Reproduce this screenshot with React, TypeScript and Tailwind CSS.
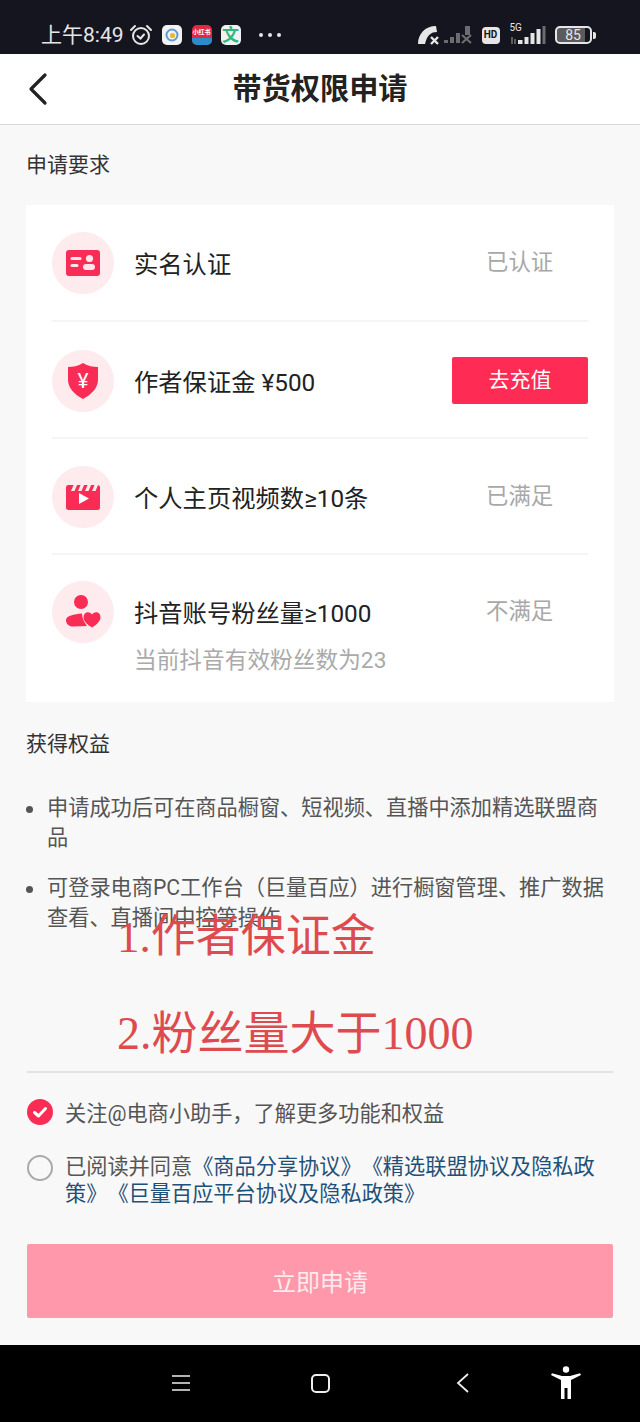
const fontStack = 'font-["Roboto","Noto_Sans_CJK_SC",sans-serif] [text-spacing-trim:space-all]';

const StatusBar = () => (
  <div className="flex h-[54px] shrink-0 items-center bg-[#15151f] pt-[16px] text-[#e6e6e6]">
    <span className="ml-[41px] text-[21px] leading-[28px]">上午8:49</span>
    <svg width="24" height="24" viewBox="0 0 24 24" fill="none" stroke="#e6e6e6" strokeWidth="2" className="ml-[5px]">
      <circle cx="12" cy="13" r="8" />
      <path d="M8.5 13 L11.5 15.5 L15 11.5" strokeLinecap="round" />
      <path d="M2 7 L6 3 M22 7 L18 3" strokeLinecap="round" />
    </svg>
    <div className="ml-[9px] flex h-[20px] w-[20px] items-center justify-center rounded-[5px] bg-[#f2f2f2]">
      <svg width="16" height="16" viewBox="0 0 16 16" fill="none">
        <circle cx="8" cy="8" r="5.5" stroke="#5f9bd6" strokeWidth="2" />
        <circle cx="8.5" cy="8.5" r="2.6" fill="#e8b93a" />
      </svg>
    </div>
    <div className="ml-[10px] flex h-[20px] w-[20px] flex-col overflow-hidden rounded-[5px] bg-[#e5283f]">
      <span className="h-[13px] pt-[3px] text-center text-[6px] leading-[8px] font-bold whitespace-nowrap text-white">小红书</span>
      <span className="flex-1 bg-[#2a8cc9]" />
    </div>
    <div className="ml-[9px] flex h-[20px] w-[20px] items-center justify-center rounded-[5px] bg-[#f2f2f2] text-[17px] leading-none font-bold text-[#2fb67c]">
      文
    </div>
    <div className="ml-[18px] flex gap-[5px]">
      <span className="h-[4px] w-[4px] rounded-full bg-[#e6e6e6]" />
      <span className="h-[4px] w-[4px] rounded-full bg-[#e6e6e6]" />
      <span className="h-[4px] w-[4px] rounded-full bg-[#e6e6e6]" />
    </div>

    <svg width="24" height="20" viewBox="0 0 24 20" className="ml-[136px]">
      <path d="M1 19 C1 9 8 1 19 1 L20 7 C14 7 10 10 8 19 Z" fill="#e6e6e6" />
      <path d="M14 12 L21 19 M21 12 L14 19" stroke="#e6e6e6" strokeWidth="2.4" />
    </svg>
    <svg width="30" height="20" viewBox="0 0 30 20" className="ml-[2px]" fill="#6b6b70">
      <rect x="1" y="15" width="4" height="3" />
      <rect x="7" y="12" width="4" height="6" />
      <rect x="13" y="8" width="4" height="10" />
      <rect x="22" y="1" width="5" height="9" />
      <path d="M19 10 L28 18 M28 10 L19 18" stroke="#6b6b70" strokeWidth="2.2" />
    </svg>
    <div className="ml-[9px] flex h-[17px] w-[18px] items-center justify-center rounded-[4px] bg-[#e6e6e6] text-[10px] leading-none font-bold text-[#15151f]">
      HD
    </div>
    <div className="relative ml-[8px] h-[22px] w-[39px]">
      <span className="absolute -top-[1px] left-[2px] text-[10px] leading-[10px]">5G</span>
      <svg width="39" height="22" viewBox="0 0 39 22" fill="#e6e6e6">
        <path d="M4 13 V20 M7 15 V20" stroke="#777" strokeWidth="1.5" />
        <path d="M10 16 H14.5 V20 H10 Z M16.5 13 H20.5 V20 H16.5 Z M22.5 9 H26.5 V20 H22.5 Z M28.5 5 H32.5 V20 H28.5 Z" />
        <rect x="34.5" y="2" width="3" height="18" fill="#6b6b70" />
      </svg>
    </div>
    <div className="ml-[8px] flex h-[18px] w-[37px] items-center justify-center rounded-[5px] border-2 border-[#e6e6e6] bg-[linear-gradient(90deg,#5a5a5f_85%,#15151f_85%)] text-[14px] leading-none">
      85
    </div>
    <span className="ml-[1px] h-[7px] w-[3px] rounded-r-[2px] bg-[#e6e6e6]" />
  </div>
);

const IconCircle = ({ children }: { children: React.ReactNode }) => (
  <div className="h-[62px] w-[62px] shrink-0 rounded-full bg-[#fdebee]">
    <svg width="62" height="62" viewBox="0 0 62 62">{children}</svg>
  </div>
);

const CardIcon = () => (
  <IconCircle>
    <rect x="14" y="18" width="34" height="26" rx="3" fill="#f92c55" />
    <rect x="18.5" y="25" width="11" height="3" rx="1.5" fill="#fde6ea" />
    <rect x="18.5" y="32" width="8" height="3" rx="1.5" fill="#fde6ea" />
    <circle cx="37.5" cy="26.5" r="3.6" fill="#fde6ea" />
    <rect x="31" y="32" width="12" height="6" rx="3" fill="#fde6ea" />
  </IconCircle>
);

const ShieldIcon = () => (
  <IconCircle>
    <path d="M31 13 C36 16 41 17 46 17 V30 C46 38 39 45 31 49 C23 45 16 38 16 30 V17 C21 17 26 16 31 13 Z" fill="#f92c55" />
    <text x="31" y="38" textAnchor="middle" fontSize="21" fontWeight="400" fill="#fff" fontFamily="Roboto">¥</text>
  </IconCircle>
);

const VideoIcon = () => (
  <IconCircle>
    <rect x="14" y="19" width="34" height="25" rx="2.5" fill="#f92c55" />
    <path d="M19 25 L22 18 H25.5 L22.5 25 Z M26 25 L29 18 H32.5 L29.5 25 Z M33 25 L36 18 H39.5 L36.5 25 Z M40 25 L43 18 H46.5 L43.5 25 Z" fill="#fdebee" />
    <path d="M27 27 L37 32.5 L27 38 Z" fill="#fff" strokeLinejoin="round" />
  </IconCircle>
);

const FansIcon = () => (
  <IconCircle>
    <circle cx="29" cy="21" r="7" fill="#f92c55" />
    <path d="M14 39 C14 35 22 33 30 32.5 C30 37 32 41 35 45 L21 45.5 C17 45.5 14 43 14 39 Z" fill="#f92c55" />
    <path d="M40 46.5 C35 43.5 31.5 40 31.5 36 C31.5 31.5 37 29.5 40 33.5 C43 29.5 48.5 31 48.5 36 C48.5 40 45 43.5 40 46.5 Z" fill="#f92c55" />
  </IconCircle>
);

const Requirement = ({
  icon,
  title,
  note,
  right,
  className
}: {
  icon: React.ReactNode;
  title: string;
  note?: string;
  right: React.ReactNode;
  className: string;
}) => (
  <div className={`flex items-start ${className}`}>
    {icon}
    <div className="ml-[20px] flex-1 pt-[17px]">
      <div className="text-[24.3px] leading-[32px] text-[#222]">{title}</div>
      {note && <div className="mt-[15px] text-[22.7px] leading-[32px] text-[#aaa]">{note}</div>}
    </div>
    {right}
  </div>
);

const Status = ({ text }: { text: string }) => (
  <span className="w-[102px] pt-[14px] text-[22.4px] leading-[32px] text-[#a8a8a8]">{text}</span>
);

const Bullet = ({ children }: { children: React.ReactNode }) => (
  <li className="flex">
    <span className="mt-[13px] mr-[14px] h-[7px] w-[7px] shrink-0 rounded-full bg-[#555]" />
    <span className="text-[21.2px] leading-[30px] text-[#555]">{children}</span>
  </li>
);

export default function App() {
  return (
    <div className={`flex h-[1422px] w-[640px] flex-col overflow-hidden bg-[#f8f8f8] ${fontStack}`}>
      <StatusBar />

      <header className="grid h-[71px] shrink-0 grid-cols-[1fr_auto_1fr] items-center border-b border-[#d8d8d8] bg-white">
        <svg width="22" height="34" viewBox="0 0 22 34" fill="none" stroke="#222" strokeWidth="3.2" strokeLinecap="round" strokeLinejoin="round" className="ml-[28px]">
          <path d="M17 3 L3 17 L17 31" />
        </svg>
        <h1 className="text-[29.2px] leading-[40px] font-bold text-[#222]">带货权限申请</h1>
      </header>

      <main className="relative flex-1">
        <h2 className="mt-[25px] ml-[26px] text-[21px] leading-[30px] text-[#333]">申请要求</h2>

        <section className="mx-[26px] mt-[25px] h-[497px] bg-white px-[26px]">
          <Requirement
            className="h-[117px] border-b-2 border-[#f5f5f5] pt-[27px]"
            icon={<CardIcon />}
            title="实名认证"
            right={<Status text="已认证" />}
          />
          <Requirement
            className="h-[117px] border-b-2 border-[#f5f5f5] pt-[28px]"
            icon={<ShieldIcon />}
            title="作者保证金 ¥500"
            right={
              <button className="mt-[7px] h-[47px] w-[136px] rounded-[2px] bg-[#fe2c55] pt-[1px] text-[21px] text-white">
                去充值
              </button>
            }
          />
          <Requirement
            className="h-[116px] border-b-2 border-[#f5f5f5] pt-[27px]"
            icon={<VideoIcon />}
            title="个人主页视频数≥10条"
            right={<Status text="已满足" />}
          />
          <Requirement
            className="pt-[26px]"
            icon={<FansIcon />}
            title="抖音账号粉丝量≥1000"
            note="当前抖音有效粉丝数为23"
            right={<Status text="不满足" />}
          />
        </section>

        <h2 className="mt-[27px] ml-[26px] text-[21px] leading-[30px] text-[#333]">获得权益</h2>

        <ul className="mt-[34px] ml-[26px] flex w-[581px] flex-col gap-[20px]">
          <Bullet>申请成功后可在商品橱窗、短视频、直播中添加精选联盟商品</Bullet>
          <Bullet>可登录电商PC工作台（巨量百应）进行橱窗管理、推广数据查看、直播间中控等操作</Bullet>
        </ul>

        <div className="mx-[27px] mt-[138px] border-t-2 border-[#e2e2e2] pt-[26px]">
          <div className="flex items-start">
            <svg width="26" height="26" viewBox="0 0 26 26" className="shrink-0">
              <circle cx="13" cy="13" r="13" fill="#f92c55" />
              <path d="M7.5 13.5 L11.5 17 L18.5 9.5" fill="none" stroke="#fff" strokeWidth="3" strokeLinecap="round" strokeLinejoin="round" />
            </svg>
            <span className="ml-[12px] text-[21.2px] leading-[30px] text-[#555]">关注@电商小助手，了解更多功能和权益</span>
          </div>
          <div className="mt-[24px] flex items-start">
            <span className="mt-[2px] h-[26px] w-[26px] shrink-0 rounded-full border-2 border-[#aaa]" />
            <p className="ml-[12px] text-[21.2px] leading-[27px] text-[#555]">
              已阅读并同意
              <span className="text-[#1f5078]">《商品分享协议》《精选联盟协议及隐私政策》《巨量百应平台协议及隐私政策》</span>
            </p>
          </div>
        </div>

        <button className="mx-[27px] mt-[37px] h-[74px] w-[586px] rounded-[2px] bg-[#fe98aa] pt-[3px] text-[24px] text-white/80">
          立即申请
        </button>

        {/* annotation written over the screenshot */}
        <div className='absolute top-[782px] left-[117px] font-["Liberation_Serif","Noto_Sans_CJK_SC",serif] text-[45px] leading-[60px] whitespace-nowrap text-[#de4b4f]'>
          <div>1.作者保证金</div>
          <div className="mt-[37px] text-[46px]">2.粉丝量大于1000</div>
        </div>
      </main>

      <nav className="flex h-[77px] shrink-0 items-center bg-black pb-[1px]">
        <svg width="18" height="18" viewBox="0 0 18 18" stroke="#eee" strokeWidth="1.6" className="ml-[172px]">
          <path d="M0 2 H18 M0 9 H18 M0 16 H18" />
        </svg>
        <span className="ml-[121px] h-[19px] w-[19px] rounded-[5px] border-2 border-[#eee]" />
        <svg width="14" height="20" viewBox="0 0 14 20" fill="none" stroke="#eee" strokeWidth="1.8" className="ml-[126px]">
          <path d="M12 1 L2 10 L12 19" />
        </svg>
        <svg width="30" height="34" viewBox="0 0 30 34" fill="#fff" className="ml-[81px]">
          <circle cx="15" cy="3.5" r="3.2" />
          <path d="M0 9 L1 7.2 L11 10 H19 L29 7.2 L30 9 L20 14 V33 H16.5 V22 H13.5 V33 H10 V14 Z" />
        </svg>
      </nav>
    </div>
  );
}
